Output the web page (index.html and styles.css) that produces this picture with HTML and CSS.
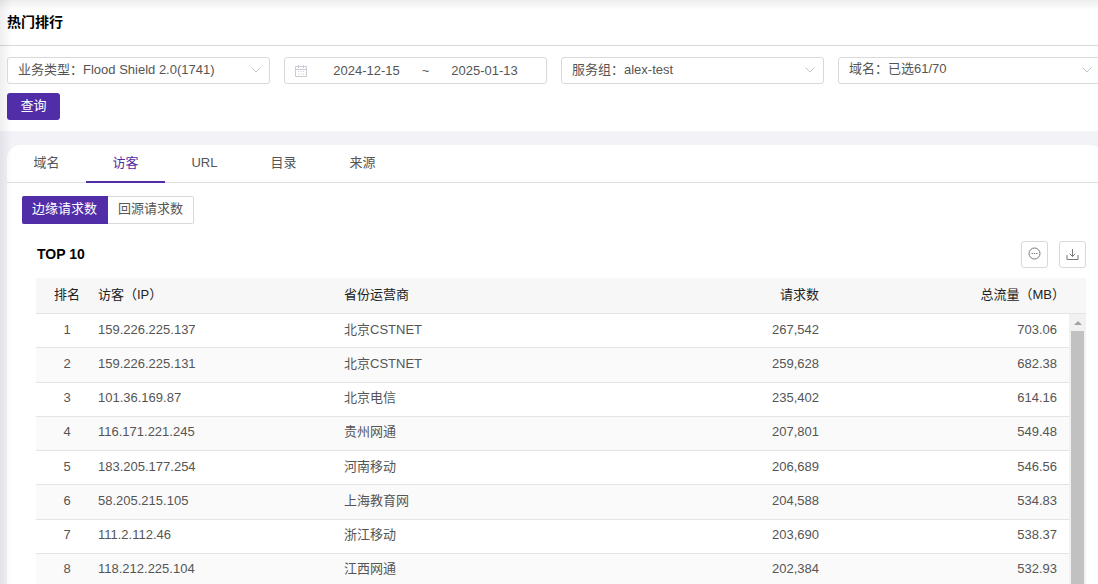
FILE: index.html
```html
<!DOCTYPE html>
<html lang="zh-CN">
<head>
<meta charset="utf-8">
<title>热门排行</title>
<link rel="stylesheet" href="styles.css">
</head>
<body>
<div class="page">
  <header class="page-head"><h1 class="title">热门排行</h1></header>

  <form class="filters">
    <div class="field">
      <select class="control" aria-label="业务类型"><option>业务类型：Flood Shield 2.0(1741)</option></select>
      <svg class="chevron" viewBox="0 0 10 6"><path d="M.5.5 5 5 9.5.5"/></svg>
    </div>
    <div class="control dates">
      <svg class="calendar" viewBox="0 0 12 12"><path d="M.5 1.500h11v10H.5zM.5 4.500h11M3.500 0v3M8.500 0v3"/><path d="M3 6.500h1M5.500 6.500h1M8 6.500h1M3 9h1M5.500 9h1M8 9h1"/></svg>
      <input class="date" type="text" aria-label="开始日期" value="2024-12-15">
      <span class="tilde">~</span>
      <input class="date" type="text" aria-label="结束日期" value="2025-01-13">
    </div>
    <div class="field">
      <select class="control" aria-label="服务组"><option>服务组：alex-test</option></select>
      <svg class="chevron" viewBox="0 0 10 6"><path d="M.5.5 5 5 9.5.5"/></svg>
    </div>
    <div class="field">
      <select class="control raised" aria-label="域名"><option>域名：已选61/70</option></select>
      <svg class="chevron" viewBox="0 0 10 6"><path d="M.5.5 5 5 9.5.5"/></svg>
    </div>
    <button class="submit" type="button">查询</button>
  </form>

  <main class="card">
    <nav class="tabs">
      <a class="tab" href="#domain">域名</a>
      <a class="tab active" href="#visitor">访客</a>
      <a class="tab" href="#url">URL</a>
      <a class="tab" href="#directory">目录</a>
      <a class="tab" href="#source">来源</a>
    </nav>
    <div class="segments">
      <button class="segment on" type="button">边缘请求数</button>
      <button class="segment" type="button">回源请求数</button>
    </div>
    <section class="ranking">
      <div class="ranking-head">
        <h2 class="subtitle">TOP 10</h2>
        <div class="tools">
          <button class="tool" type="button" aria-label="更多"><svg class="icon more" viewBox="0 0 13 13"><circle cx="6.500" cy="6.500" r="5.500"/><path d="M3.500 6.500h1.400M5.800 6.500h1.400M8.100 6.500h1.400"/></svg></button>
          <button class="tool" type="button" aria-label="下载"><svg class="icon" viewBox="0 0 13 13"><path d="M1 7v4.500h11V7M6.500 1v7.500M3.800 5.800l2.700 2.700 2.700-2.700"/></svg></button>
        </div>
      </div>
      <div class="table-box">
        <table class="table">
          <thead>
            <tr><th class="rank">排名</th><th class="ip">访客（IP）</th><th class="isp">省份运营商</th><th class="num">请求数</th><th class="num last">总流量（MB）</th></tr>
          </thead>
          <tbody>
            <tr><td class="rank">1</td><td>159.226.225.137</td><td>北京CSTNET</td><td class="num">267,542</td><td class="num last">703.06</td></tr>
            <tr><td class="rank">2</td><td>159.226.225.131</td><td>北京CSTNET</td><td class="num">259,628</td><td class="num last">682.38</td></tr>
            <tr><td class="rank">3</td><td>101.36.169.87</td><td>北京电信</td><td class="num">235,402</td><td class="num last">614.16</td></tr>
            <tr><td class="rank">4</td><td>116.171.221.245</td><td>贵州网通</td><td class="num">207,801</td><td class="num last">549.48</td></tr>
            <tr><td class="rank">5</td><td>183.205.177.254</td><td>河南移动</td><td class="num">206,689</td><td class="num last">546.56</td></tr>
            <tr><td class="rank">6</td><td>58.205.215.105</td><td>上海教育网</td><td class="num">204,588</td><td class="num last">534.83</td></tr>
            <tr><td class="rank">7</td><td>111.2.112.46</td><td>浙江移动</td><td class="num">203,690</td><td class="num last">538.37</td></tr>
            <tr><td class="rank">8</td><td>118.212.225.104</td><td>江西网通</td><td class="num">202,384</td><td class="num last">532.93</td></tr>
          </tbody>
        </table>
        <div class="scrollbar" aria-hidden="true"><span class="arrow"></span><span class="thumb"></span></div>
      </div>
    </section>
  </main>
</div>
</body>
</html>
```
FILE: styles.css
```css
* { box-sizing: border-box; }

body {
  margin: 0;
  background: #f2f2f7;
  color: #555;
  font: 13px/18px "Liberation Sans", "Noto Sans CJK SC", sans-serif;
}

button, input, select { font: inherit; color: inherit; margin: 0; }

.page { position: relative; overflow: hidden; height: 100vh; }

/* soft shadows cast by the side menu and the top bar */
.page::before, .page::after {
  content: "";
  position: absolute;
  top: 0;
  left: 0;
  pointer-events: none;
}
.page::before {
  bottom: 0;
  width: 12px;
  background: linear-gradient(to right, rgba(40, 40, 70, .08), rgba(40, 40, 70, 0));
}
.page::after {
  right: 0;
  height: 10px;
  background: linear-gradient(rgba(0, 0, 0, .07), rgba(0, 0, 0, 0));
}

.page-head {
  background: #fff;
  border-bottom: 1px solid #d9d9d9;
  padding: 12px 7px 13px;
}
.title { margin: 0; color: #000; font-size: 14px; line-height: 20px; font-weight: 700; }

.filters {
  display: grid;
  grid-template-columns: repeat(4, minmax(0, 1fr));
  gap: 9px 14px;
  margin-right: -3px;
  padding: 11px 0 11px 7px;
  background: #fff;
}
.field { position: relative; }
.control {
  width: 100%;
  height: 27px;
  border: 1px solid #d9d9d9;
  border-radius: 3px;
  background: #fff;
}
select.control { display: block; appearance: none; padding: 0 24px 2px 10px; }
select.raised { padding-bottom: 4px; }
.chevron {
  position: absolute;
  right: 9px;
  top: 10px;
  width: 10px;
  height: 6px;
  fill: none;
  stroke: #c0c4cc;
  pointer-events: none;
}
.dates { display: flex; align-items: center; padding: 0 9px 0 10px; }
.calendar { flex: none; width: 12px; height: 12px; margin-right: 7px; fill: none; stroke: #c8ccd3; }
.date { flex: 1; min-width: 0; border: 0; padding: 0; text-align: center; background: none; }
.tilde { width: 13px; text-align: center; }
.submit {
  justify-self: start;
  width: 53px;
  height: 27px;
  padding: 0 0 2px;
  border: 0;
  border-radius: 3px;
  background: #512da8;
  color: #fff;
}

.card {
  margin: 14px -6px 0 7px;
  min-height: 100%;
  border-radius: 14px;
  background: #fff;
}
.tabs { display: flex; height: 38px; border-bottom: 1px solid #e0e0e0; }
.tab {
  width: 79px;
  height: 38px;
  line-height: 36px;
  text-align: center;
  color: #555;
  text-decoration: none;
}
.tab.active { color: #512da8; border-bottom: 2px solid #512da8; }

.segments { display: flex; padding: 13px 15px 0; }
.segment {
  height: 28px;
  padding: 0 10px 2px;
  border: 1px solid #d9d9d9;
  border-left: 0;
  border-radius: 0 2px 2px 0;
  background: #fff;
}
.segment.on {
  border-color: #512da8;
  border-radius: 2px 0 0 2px;
  background: #512da8;
  color: #fff;
}

.ranking { padding: 17px 18px 0 29px; }
.ranking-head { display: flex; align-items: center; justify-content: space-between; margin-bottom: 10px; }
.subtitle { margin: 0; padding: 0 0 2px 1px; font-size: 14px; color: #000; }
.tools { display: flex; gap: 11px; }
.tool {
  display: flex;
  align-items: center;
  justify-content: center;
  width: 27px;
  height: 27px;
  padding: 0;
  border: 1px solid #d9d9d9;
  border-radius: 3px;
  background: #fff;
}
.icon { width: 13px; height: 13px; fill: none; stroke: #777; }
.more { margin-bottom: 2px; }

.table-box { position: relative; }
.table { width: 100%; height: 310px; table-layout: fixed; border-collapse: separate; border-spacing: 0; }
.table th, .table td {
  padding: 0 0 2px;
  border-bottom: 1px solid #e4e4e4;
  text-align: left;
  white-space: nowrap;
}
.table th { height: 36px; background: #f7f7f7; color: #222; font-weight: 400; }
.table tbody tr:nth-child(even) { background: #fafafa; }
.table .rank { width: 62px; text-align: center; }
.table .ip, .table .isp { width: 246px; }
.table .num { text-align: right; }
.table .last { width: 267px; padding-right: 29px; }
.table th.last { padding-right: 21px; }
.scrollbar {
  position: absolute;
  top: 36px;
  right: 0;
  bottom: 0;
  width: 17px;
  padding: 0 2px;
  background: #f1f1f1;
  display: flex;
  flex-direction: column;
  align-items: center;
}
.arrow {
  margin: 7px 0 6px;
  border: 4px solid transparent;
  border-top: 0;
  border-bottom-color: #a3a3a3;
}
.thumb { flex: 1; width: 13px; background: #c1c1c1; }
```
